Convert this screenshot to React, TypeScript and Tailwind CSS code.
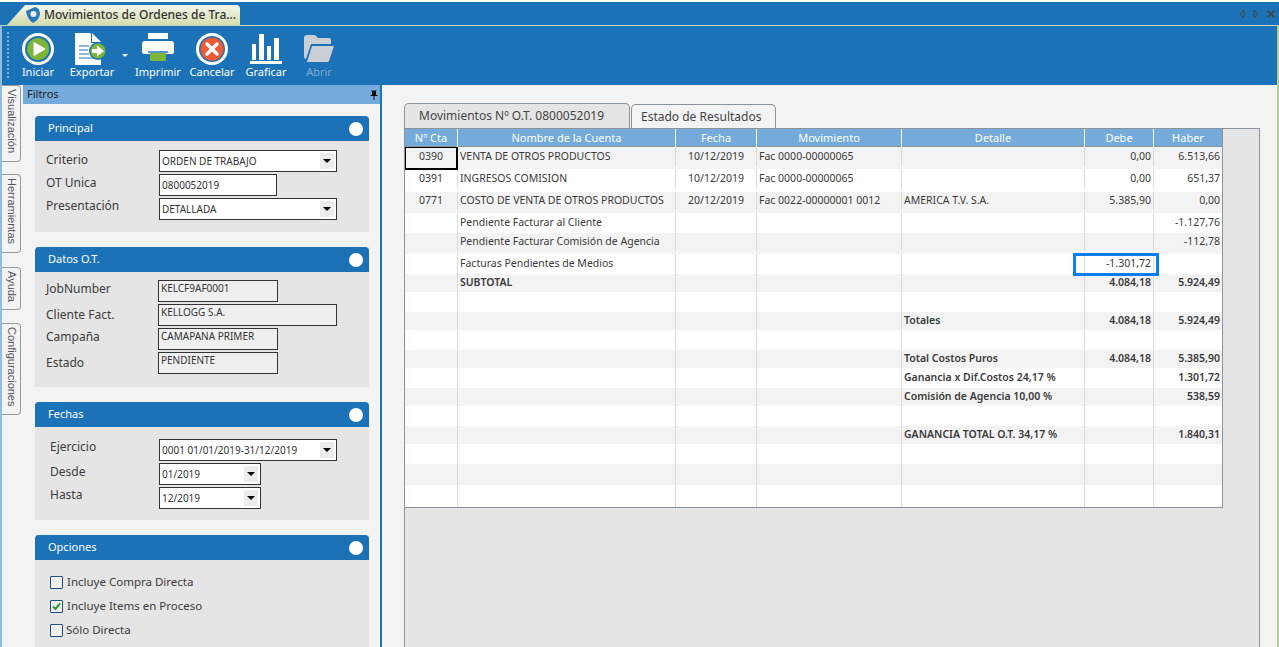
import React from "react";

const FONT = "font-['Noto_Sans','Open_Sans',sans-serif]";

function IconPlay() {
  return (
    <svg width="32" height="32" viewBox="0 0 32 32">
      <circle cx="16" cy="16" r="16" fill="#fff" />
      <circle cx="16" cy="16" r="13" fill="#1c72b6" />
      <circle cx="16" cy="16" r="11" fill="#7fb539" />
      <path d="M12 9.5 L23 16 L12 22.5 Z" fill="#fff" strokeLinejoin="round" stroke="#fff" strokeWidth="1" />
    </svg>
  );
}

function IconExport() {
  return (
    <svg width="34" height="32" viewBox="0 0 34 32">
      <path d="M0 0 H15 L26 11 V32 H1 Q0 32 0 31 Z" fill="#fff" />
      <path d="M16 0 L26 10 H16 Z" fill="#1c72b6" />
      <path d="M17 0 L26 9 H17 Z" fill="#fff" />
      <path d="M4 13 H14 M4 17 H13 M4 21 H14 M4 25 H19" stroke="#1c72b6" strokeWidth="1.2" />
      <circle cx="23" cy="18" r="9" fill="#1c72b6" />
      <circle cx="23" cy="18" r="7.5" fill="#7fb539" />
      <path d="M17 16 H22 V12.5 L29 18 L22 23.5 V20 H17 Z" fill="#fff" />
    </svg>
  );
}

function IconPrinter() {
  return (
    <svg width="32" height="32" viewBox="0 0 32 32">
      <path d="M6 0 H26 V6 H6 Z" fill="#fff" />
      <path d="M3 8 H29 Q32 8 32 11 V19 Q32 21 30 21 H2 Q0 21 0 19 V11 Q0 8 3 8 Z" fill="#fff" />
      <path d="M8 20 H24 V27 Q24 28 23 28 H9 Q8 28 8 27 Z" fill="#7fb539" />
      <path d="M6 19 H26" stroke="#1c72b6" strokeWidth="1.5" />
    </svg>
  );
}

function IconCancel() {
  return (
    <svg width="32" height="32" viewBox="0 0 32 32">
      <circle cx="16" cy="16" r="16" fill="#fff" />
      <circle cx="16" cy="16" r="13" fill="#1c72b6" />
      <circle cx="16" cy="16" r="11.5" fill="#ee5a35" />
      <path d="M11 11 L21 21 M21 11 L11 21" stroke="#fff" strokeWidth="3.4" strokeLinecap="round" />
    </svg>
  );
}

function IconChart() {
  return (
    <svg width="32" height="30" viewBox="0 0 32 30">
      <path d="M2 10 H6 V26 H2 Z M9 0 H14 V26 H9 Z M17 12 H21 V26 H17 Z M24 4 H29 V26 H24 Z" fill="#fff" />
      <path d="M0 27 H32 V30 H0 Z" fill="#fff" />
    </svg>
  );
}

function IconFolder() {
  return (
    <svg width="30" height="28" viewBox="0 0 30 28">
      <path d="M0 3 Q0 0 3 0 H11 L14 3 H25 Q27 3 27 5 V9 H7 L2 24 Q0 24 0 21 Z" fill="#c9cfd4" />
      <path d="M8 11 H30 L25 26 Q25 27 23 27 H3 Z" fill="#c9cfd4" />
    </svg>
  );
}

function ToolButton({ icon, label, width, muted }: { icon: React.ReactNode; label: string; width: string; muted?: boolean }) {
  return (
    <div className={`${width} flex flex-col items-center`}>
      <div className="h-[33px] flex items-center justify-center">{icon}</div>
      <span className={`mt-[0px] text-[11px] leading-[13px] ${muted ? "text-[#7da9cf]" : "text-white"}`}>{label}</span>
    </div>
  );
}

function GroupBox({ title, body, children }: { title: string; body: string; children: React.ReactNode }) {
  return (
    <div className="bg-[#e5e5e5]">
      <div className="h-[25px] bg-[#1c72b6] rounded-t-[4px] flex items-center justify-between pl-[13px] pr-[6px]">
        <span className="text-[11px] text-white">{title}</span>
        <span className="w-[14px] h-[14px] rounded-full bg-white" />
      </div>
      <div className={body}>{children}</div>
    </div>
  );
}

function Arrow({ wide }: { wide?: boolean }) {
  return (
    <span className={`absolute right-[2px] top-[2px] bottom-[2px] w-[14px] flex items-center justify-center bg-[#ececec] ${wide ? "" : ""}`}>
      <span className="w-0 h-0 border-x-[4px] border-x-transparent border-t-[4px] border-t-black" />
    </span>
  );
}

function Field({ label, value, labelClass, boxClass, select, readOnly }: { label: string; value: string; labelClass: string; boxClass: string; select?: boolean; readOnly?: boolean }) {
  return (
    <div className="flex h-[22px] mb-[2px]">
      <span className={`text-[12px] leading-[16px] text-[#3c3c3c] ${labelClass}`}>{label}</span>
      <div className={`relative h-[22px] border border-[#333] text-[10px] text-[#333] px-[2px] ${readOnly ? "bg-[#efefef] leading-[15px]" : "bg-white leading-[20px]"} ${boxClass}`}>
        {value}
        {select && <Arrow />}
      </div>
    </div>
  );
}

function Check({ label, checked, gap }: { label: string; checked?: boolean; gap: string }) {
  return (
    <div className="flex items-center h-[24px]">
      <span className="w-[13px] h-[13px] border border-[#1d4f80] rounded-[1px] bg-[#f0f0f0] flex items-center justify-center">
        {checked && (
          <svg width="9" height="9" viewBox="0 0 9 9">
            <path d="M1 4.5 L3.5 7 L8 1.5" stroke="#2f9a2f" strokeWidth="2" fill="none" />
          </svg>
        )}
      </span>
      <span className={`text-[11.5px] text-[#3c3c3c] ${gap}`}>{label}</span>
    </div>
  );
}

function SideTab({ label, cls }: { label: string; cls: string }) {
  return (
    <div className={`w-[19px] border border-l-0 border-[#9a9a9a] rounded-r-[4px] bg-[#f3f3f3] flex justify-center pt-[3px] ${cls}`}>
      <span className="[writing-mode:vertical-rl] text-[11px] leading-[17px] text-[#555] font-['Liberation_Sans',sans-serif]">{label}</span>
    </div>
  );
}

type Row = {
  h: string;
  text?: string;
  bold?: boolean;
  cta?: string;
  nombre?: string;
  fecha?: string;
  mov?: string;
  detalle?: string;
  debe?: string;
  haber?: string;
};

const rows: Row[] = [
  { h: "h-[22px] bg-[#f3f3f3] pb-[3px]", cta: "0390", nombre: "VENTA DE OTROS PRODUCTOS", fecha: "10/12/2019", mov: "Fac 0000-00000065", debe: "0,00", haber: "6.513,66" },
  { h: "h-[23px] bg-white pb-[3px]", cta: "0391", nombre: "INGRESOS COMISION", fecha: "10/12/2019", mov: "Fac 0000-00000065", debe: "0,00", haber: "651,37" },
  { h: "h-[21px] bg-[#f3f3f3] pb-[3px]", cta: "0771", nombre: "COSTO DE VENTA DE OTROS PRODUCTOS", fecha: "20/12/2019", mov: "Fac 0022-00000001 0012", detalle: "AMERICA T.V. S.A.", debe: "5.385,90", haber: "0,00" },
  { h: "h-[20px] bg-white", nombre: "Pendiente Facturar al Cliente", haber: "-1.127,76" },
  { h: "h-[21px] bg-[#f3f3f3] pb-[3px]", nombre: "Pendiente Facturar Comisión de Agencia", haber: "-112,78" },
  { h: "h-[20px] bg-white", nombre: "Facturas Pendientes de Medios", debe: "-1.301,72" },
  { h: "h-[18px] bg-[#f3f3f3]", nombre: "SUBTOTAL", debe: "4.084,18", haber: "5.924,49", bold: true },
  { h: "h-[20px] bg-white" },
  { h: "h-[18px] bg-[#f3f3f3]", detalle: "Totales", debe: "4.084,18", haber: "5.924,49", bold: true },
  { h: "h-[20px] bg-white" },
  { h: "h-[18px] bg-[#f3f3f3]", detalle: "Total Costos Puros", debe: "4.084,18", haber: "5.385,90", bold: true },
  { h: "h-[20px] bg-white", detalle: "Ganancia x Dif.Costos 24,17 %", haber: "1.301,72", bold: true },
  { h: "h-[18px] bg-[#f3f3f3]", detalle: "Comisión de Agencia 10,00 %", haber: "538,59", bold: true },
  { h: "h-[20px] bg-white" },
  { h: "h-[18px] bg-[#f3f3f3]", detalle: "GANANCIA TOTAL O.T. 34,17 %", haber: "1.840,31", bold: true },
  { h: "h-[20px] bg-white" },
  { h: "h-[21px] bg-[#f3f3f3]" },
  { h: "h-[22px] bg-white" },
];

const COLS = "grid grid-cols-[53px_218px_81px_145px_183px_69px_68px]";
const CELL = "border-r border-[#dcdcdc] px-[2px] whitespace-nowrap overflow-hidden";

export default function App() {
  return (
    <div className={`${FONT} w-[1279px] h-[647px] overflow-hidden bg-white pt-[2px] flex flex-col text-[#333]`}>
      {/* title tab strip */}
      <div className="h-[23px] bg-[#1c72b6] flex justify-between shrink-0 relative">
        <div className="ml-[7px] mt-[3px] w-[233px] h-[20px] pl-[18px] bg-gradient-to-b from-[#f4f7ea] to-[#d4dcae] rounded-tr-[4px] [clip-path:polygon(0_100%,18px_0,100%_0,100%_100%)] flex items-center gap-[3px]">
          <svg width="16" height="16" viewBox="0 0 16 16">
            <path d="M1 4 L10 0 Q15 1 15 7 Q14 13 8 16 Q2 12 1 4 Z" fill="#2a78b8" />
            <circle cx="8.5" cy="7" r="3" fill="#eef3f7" />
          </svg>
          <span className="text-[12px] font-medium text-[#333] whitespace-nowrap">Movimientos de Ordenes de Tra...</span>
        </div>
        <div className="flex items-center gap-[8px] pr-[4px] text-[#444]">
          <svg width="6" height="10" viewBox="0 0 6 10"><path d="M5 1 L1 5 L5 9 Z" fill="none" stroke="#444" /></svg>
          <svg width="6" height="10" viewBox="0 0 6 10"><path d="M1 1 L5 5 L1 9 Z" fill="none" stroke="#444" /></svg>
          <svg width="8" height="8" viewBox="0 0 8 8"><path d="M0.5 0.5 L7.5 7.5 M7.5 0.5 L0.5 7.5" stroke="#444" strokeWidth="1.6" /></svg>
        </div>
      </div>

      <div className="flex-1 flex flex-col border-l-2 border-l-[#8fbcdf] border-r-2 border-r-[#b5cc94] border-t border-t-[#c5d5c0] min-h-0">
        {/* toolbar */}
        <div className="h-[58px] bg-[#1c72b6] flex shrink-0 pl-[5px] pt-[6px] relative">
          <div className="w-[2px] h-[46px] border-l-2 border-dotted border-l-[#7fb0d8] mr-[5px]" />
          <ToolButton icon={<IconPlay />} label="Iniciar" width="w-[48px]" />
          <ToolButton icon={<IconExport />} label="Exportar" width="w-[60px]" />
          <div className="w-[9px] pt-[22px]">
            <span className="block w-0 h-0 border-x-[3px] border-x-transparent border-t-[3px] border-t-white" />
          </div>
          <ToolButton icon={<IconPrinter />} label="Imprimir" width="w-[54px]" />
          <ToolButton icon={<IconCancel />} label="Cancelar" width="w-[54px]" />
          <ToolButton icon={<IconChart />} label="Graficar" width="w-[54px]" />
          <ToolButton icon={<IconFolder />} label="Abrir" width="w-[52px]" muted />
        </div>

        <div className="flex-1 flex min-h-0 bg-[#1c72b6] pt-[1px]">
          {/* side tabs */}
          <div className="w-[21px] shrink-0 bg-[#f3f3f3] flex flex-col">
            <SideTab label="Visualización" cls="h-[77px] mb-[12px]" />
            <SideTab label="Herramientas" cls="h-[79px] mb-[14px]" />
            <SideTab label="Ayuda" cls="h-[43px] mb-[13px]" />
            <SideTab label="Configuraciones" cls="h-[92px]" />
          </div>

          {/* filtros */}
          <div className="w-[357px] shrink-0 bg-[#f3f3f3] flex flex-col overflow-hidden">
            <div className="h-[19px] bg-[#74abda] flex items-center justify-between pl-[4px] pr-[2px] shrink-0">
              <span className="text-[11px] text-[#222]">Filtros</span>
              <svg width="8" height="10" viewBox="0 0 8 10">
                <path d="M1.5 0.5 H6.5 V1.5 H6 V5 H7.5 V6 H4.5 V10 H3.5 V6 H0.5 V5 H2 V1.5 H1.5 Z" fill="#111" />
              </svg>
            </div>
            <div className="pt-[12px] px-[12px] pr-[11px] flex flex-col gap-[15px]">
              <GroupBox title="Principal" body="h-[91px] pt-[9px] pl-[11px]">
                <Field label="Criterio" value="ORDEN DE TRABAJO" labelClass="w-[113px] pt-[2px]" boxClass="w-[178px]" select />
                <Field label="OT Unica" value="0800052019" labelClass="w-[113px] pt-[1px]" boxClass="w-[118px]" />
                <Field label="Presentación" value="DETALLADA" labelClass="w-[113px] pt-[0px]" boxClass="w-[178px]" select />
              </GroupBox>
              <GroupBox title="Datos O.T." body="h-[115px] pt-[8px] pl-[11px]">
                <Field label="JobNumber" value="KELCF9AF0001" labelClass="w-[112px] pt-[1px]" boxClass="w-[120px]" readOnly />
                <Field label="Cliente Fact." value="KELLOGG S.A." labelClass="w-[112px] pt-[3px]" boxClass="w-[179px]" readOnly />
                <Field label="Campaña" value="CAMAPANA PRIMER" labelClass="w-[112px] pt-[1px]" boxClass="w-[120px]" readOnly />
                <Field label="Estado" value="PENDIENTE" labelClass="w-[112px] pt-[3px]" boxClass="w-[120px]" readOnly />
              </GroupBox>
              <GroupBox title="Fechas" body="h-[93px] pt-[12px] pl-[15px]">
                <Field label="Ejercicio" value="0001 01/01/2019-31/12/2019" labelClass="w-[109px]" boxClass="w-[178px]" select />
                <Field label="Desde" value="01/2019" labelClass="w-[109px] pt-[1px]" boxClass="w-[102px]" select />
                <Field label="Hasta" value="12/2019" labelClass="w-[109px] pt-[0px]" boxClass="w-[102px]" select />
              </GroupBox>
              <GroupBox title="Opciones" body="h-[120px] pt-[10px] pl-[15px]">
                <Check label="Incluye Compra Directa" gap="ml-[4px]" />
                <Check label="Incluye Items en Proceso" checked gap="ml-[4px]" />
                <Check label="Sólo Directa" gap="ml-[3px]" />
                <Check label="" gap="ml-[4px]" />
              </GroupBox>
            </div>
          </div>

          <div className="w-[2px] shrink-0 bg-[#1c72b6]" />

          {/* contenido */}
          <div className="flex-1 bg-[#f3f3f3] pl-[22px] pr-[17px] pt-[18px] flex flex-col min-w-0">
            <div className="flex h-[25px] shrink-0 items-end">
              <div className="w-[226px] h-[25px] bg-[#e5e5e5] border border-b-0 border-[#8a9399] rounded-t-[5px] pl-[14px] text-[12px] leading-[24px] text-[#444]">
                Movimientos Nº O.T. 0800052019
              </div>
              <div className="w-[145px] ml-[1px] h-[24px] bg-[#f3f3f3] border border-b-0 border-[#8a9399] rounded-t-[5px] pl-[9px] text-[12px] leading-[23px] text-[#444]">
                Estado de Resultados
              </div>
            </div>
            <div className="flex-1 bg-[#e5e5e5] border border-[#8a9399] border-b-0 min-h-0">
              <div className="relative w-[818px] border-r border-b border-[#8a9399] text-[10.5px] text-[#3a3a3a]">
                <div className={`${COLS} h-[18px] bg-[#74abda] text-white text-[11px] leading-[18px] text-center border-b border-[#8a9399]`}>
                  <span className="border-r border-white">Nº Cta</span>
                  <span className="border-r border-white">Nombre de la Cuenta</span>
                  <span className="border-r border-white">Fecha</span>
                  <span className="border-r border-white">Movimiento</span>
                  <span className="border-r border-white">Detalle</span>
                  <span className="border-r border-white">Debe</span>
                  <span>Haber</span>
                </div>
                {rows.map((r, i) => (
                  <div key={i} className={`${COLS} ${r.h} ${r.bold ? "font-semibold" : ""}`}>
                    <div className={`${CELL} flex items-center justify-center`}>{r.cta}</div>
                    <div className={`${CELL} flex items-center`}>{r.nombre}</div>
                    <div className={`${CELL} flex items-center justify-center`}>{r.fecha}</div>
                    <div className={`${CELL} flex items-center`}>{r.mov}</div>
                    <div className={`${CELL} flex items-center`}>{r.detalle}</div>
                    <div className={`${CELL} flex items-center justify-end`}>{r.debe}</div>
                    <div className="px-[2px] flex items-center justify-end whitespace-nowrap">{r.haber}</div>
                  </div>
                ))}
                {/* celda activa y marca azul encima de la grilla */}
                <div className="absolute left-0 top-[18px] w-[53px] h-[23px] border border-r-2 border-b-2 border-black" />
                <div className="absolute left-[668px] top-[124px] w-[86px] h-[23px] border-[3px] border-[#0a7df0] rounded-[1px]" />
              </div>
            </div>
          </div>
        </div>
      </div>
    </div>
  );
}
